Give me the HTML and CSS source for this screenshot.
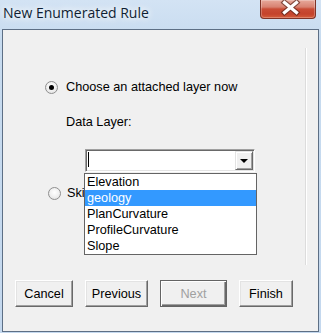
FILE: index.html
```html
<!DOCTYPE html>
<html>
<head>
<meta charset="utf-8">
<link rel="stylesheet" href="styles.css">
</head>
<body>
<div class="window">
  <div class="titlebar">
    <span class="title">New Enumerated Rule</span>
    <div class="close">
      <svg width="56" height="19" viewBox="0 0 56 19">
        <path d="M24.5 2.5 L36.5 12.5 M36.5 2.5 L24.5 12.5" stroke="#5a2418" stroke-width="5.5" stroke-linecap="square" fill="none" opacity="0.7"/>
        <path d="M24.5 2.5 L36.5 12.5 M36.5 2.5 L24.5 12.5" stroke="#ffffff" stroke-width="3.2" stroke-linecap="square" fill="none"/>
      </svg>
    </div>
  </div>
  <div class="client">
    <div class="panel">
      <div class="radio-row first">
        <span class="radio checked"></span>
        <span class="label">Choose an attached layer now</span>
      </div>
      <div class="field-label">Data Layer:</div>
      <div class="combo">
        <span class="caret"></span>
        <span class="drop-btn"><span class="tri"></span></span>
      </div>
      <div class="radio-row second">
        <span class="radio"></span>
        <span class="label">Skip</span>
      </div>
    </div>
    <div class="buttons">
      <button class="btn w-cancel">Cancel</button>
      <button class="btn w-prev">Previous</button>
      <button class="btn w-next default" disabled>Next</button>
      <button class="btn w-finish">Finish</button>
    </div>
  </div>
  <div class="dropdown">
    <div class="item">Elevation</div>
    <div class="item selected">geology</div>
    <div class="item">PlanCurvature</div>
    <div class="item">ProfileCurvature</div>
    <div class="item">Slope</div>
  </div>
</div>
</body>
</html>
```
FILE: styles.css
```css
html, body {
  margin: 0;
  padding: 0;
  background: #c6daef;
}
.window {
  position: relative;
  width: 321px;
  height: 333px;
  background: linear-gradient(to bottom, #d3e3f4 0px, #c7dbef 40px, #c4d8ee 333px);
  overflow: hidden;
  font-family: "Liberation Sans", Arial, sans-serif;
  font-size: 12.7px;
  color: #000;
}
.titlebar {
  position: relative;
  height: 29px;
  display: flex;
  align-items: flex-start;
}
.title {
  font-family: "Open Sans", "Liberation Sans", sans-serif;
  font-size: 14px;
  color: #0f1e33;
  margin-left: 3px;
  margin-top: 3px;
  line-height: 19px;
  text-shadow: 0 0 6px #ffffff, 0 0 10px #ffffff;
}
.close {
  position: absolute;
  left: 260px;
  top: 0;
  width: 56px;
  height: 19px;
  box-sizing: border-box;
  border: 1px solid #7e3327;
  border-top: none;
  border-radius: 0 0 4px 4px;
  background: linear-gradient(to bottom, #e7a99b 0px, #d88271 7px, #c94c35 9px, #c4432c 14px, #d9643f 19px);
  box-shadow: inset 0 0 0 1px rgba(255,255,255,0.25);
}
.close svg {
  position: absolute;
  left: -1px;
  top: 0;
}
.client {
  width: 317px;
  height: 303px;
  margin-left: 2px;
  box-sizing: border-box;
  border: 1px solid #5d6f85;
  background: #f0f0f0;
  display: flex;
  flex-direction: column;
}
.panel {
  margin-top: 18px;
  width: 303px;
  height: 217px;
  box-sizing: border-box;
  border-right: 1px solid #dcdcdc;
  box-shadow: 1px 0 0 #ffffff;
  padding-top: 31px;
  display: flex;
  flex-direction: column;
  align-items: flex-start;
}
.radio-row {
  display: flex;
  align-items: center;
  height: 16px;
  white-space: nowrap;
}
.radio-row.first {
  margin-left: 42px;
}
.radio-row.second {
  margin-top: 13px;
  margin-left: 45px;
}
.radio-row .label {
  margin-left: 8px;
}
.radio-row.second .label {
  margin-left: 6px;
}
.radio {
  width: 13px;
  height: 13px;
  box-sizing: border-box;
  border-radius: 50%;
  border: 1px solid #8f8f8f;
  background: radial-gradient(circle at 50% 40%, #ffffff 0, #f2f2f2 45%, #dcdcdc 100%);
  position: relative;
  flex: none;
}
.radio.checked::after {
  content: "";
  position: absolute;
  left: 3px;
  top: 3px;
  width: 5px;
  height: 5px;
  border-radius: 50%;
  background: #000;
}
.field-label {
  margin-top: 19px;
  margin-left: 63px;
  height: 16px;
  line-height: 16px;
}
.combo {
  position: relative;
  margin-top: 19px;
  margin-left: 82px;
  width: 170px;
  height: 23px;
  box-sizing: border-box;
  border-top: 1px solid #a0a0a0;
  border-left: 1px solid #a0a0a0;
  border-right: 1px solid #ffffff;
  border-bottom: 1px solid #ffffff;
  box-shadow: inset 1px 1px 0 #696969, inset -1px -1px 0 #e3e3e3;
  background: #fff;
}
.caret {
  position: absolute;
  left: 2px;
  top: 2px;
  width: 1px;
  height: 15px;
  background: #000;
}
.drop-btn {
  position: absolute;
  right: 1px;
  top: 1px;
  width: 18px;
  height: 19px;
  box-sizing: border-box;
  background: #f0f0f0;
  border-top: 1px solid #e3e3e3;
  border-left: 1px solid #e3e3e3;
  border-right: 1px solid #696969;
  border-bottom: 1px solid #696969;
  box-shadow: inset 1px 1px 0 #ffffff, inset -1px -1px 0 #a0a0a0;
  display: flex;
  align-items: center;
  justify-content: center;
}
.tri {
  width: 0;
  height: 0;
  border-left: 4px solid transparent;
  border-right: 4px solid transparent;
  border-top: 4px solid #000;
  margin-top: 1px;
}
.buttons {
  margin-top: 15px;
  padding-left: 12px;
  display: flex;
  gap: 12px;
}
.btn {
  height: 27px;
  box-sizing: border-box;
  padding: 0;
  font-family: "Liberation Sans", Arial, sans-serif;
  font-size: 12.7px;
  color: #000;
  background: #f0f0f0;
  border-top: 1px solid #ffffff;
  border-left: 1px solid #ffffff;
  border-right: 1px solid #696969;
  border-bottom: 1px solid #696969;
  box-shadow: inset -1px -1px 0 #a0a0a0, inset 1px 1px 0 #e3e3e3;
}
.btn.default {
  border: 1px solid #646464;
  box-shadow: inset 1px 1px 0 #ffffff, inset -1px -1px 0 #696969, inset -2px -2px 0 #a0a0a0;
  color: #a0a0a0;
}
.w-cancel { width: 58px; }
.w-prev { width: 63px; }
.w-next { width: 67px; }
.w-finish { width: 54px; }
.dropdown {
  position: absolute;
  left: 84px;
  top: 173px;
  width: 173px;
  height: 82px;
  box-sizing: border-box;
  border: 1px solid #646464;
  background: #fff;
}
.item {
  height: 16px;
  line-height: 16px;
  padding-left: 2px;
  white-space: nowrap;
}
.item.selected {
  background: #3399ff;
  color: #fff;
}
```
